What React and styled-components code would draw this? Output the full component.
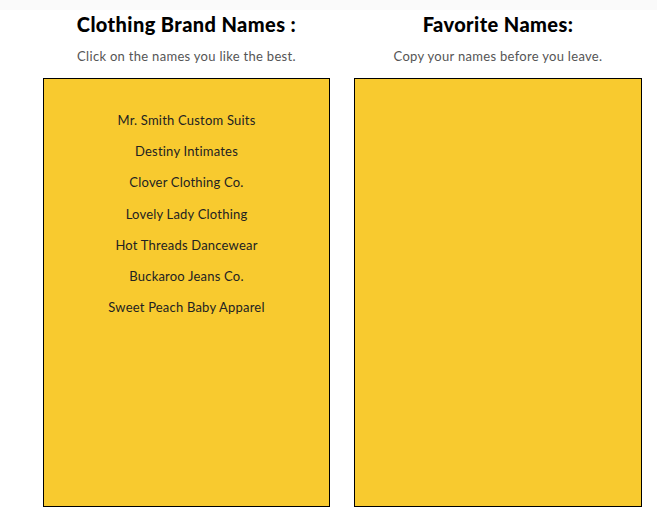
import styled, { createGlobalStyle } from 'styled-components';

const GlobalStyle = createGlobalStyle`
    body {
        margin: 0;
        background: #ffffff;
        font-family: Lato, "Open Sans", sans-serif;
    }
`;

const TopStrip = styled.div`
    height: 10px;
    background: #fafafa;
`;

const Columns = styled.div`
    display: flex;
    gap: 24px;
    padding-left: 43px;
`;

const Column = styled.section`
    display: flex;
    flex-direction: column;
    align-items: center;
    width: ${p => p.width}px;
`;

const Heading = styled.h2`
    margin: 2px 0 0;
    font-size: 20px;
    line-height: 24px;
    font-weight: 900;
    letter-spacing: 0.4px;
    color: #000;
`;

const Subtitle = styled.p`
    margin: 11px 0 0;
    font-size: 13px;
    line-height: 18px;
    letter-spacing: 0.3px;
    color: #555;
`;

const Box = styled.div`
    box-sizing: border-box;
    width: 100%;
    height: 429px;
    margin-top: 13px;
    border: 1px solid #000;
    background: #f8ca2f;
    padding-top: 26px;
`;

const NameList = styled.ul`
    list-style: none;
    margin: 0;
    padding: 0;
    text-align: center;
`;

const NameItem = styled.li`
    font-size: 13px;
    line-height: 31.2px;
    letter-spacing: 0.2px;
    color: #222;
    cursor: pointer;
`;

const names = [
    'Mr. Smith Custom Suits',
    'Destiny Intimates',
    'Clover Clothing Co.',
    'Lovely Lady Clothing',
    'Hot Threads Dancewear',
    'Buckaroo Jeans Co.',
    'Sweet Peach Baby Apparel',
];

const App = () => {

    return (
        <>
            <GlobalStyle />
            <TopStrip />
            <Columns>
                <Column width={287}>
                    <Heading>Clothing Brand Names :</Heading>
                    <Subtitle>Click on the names you like the best.</Subtitle>
                    <Box>
                        <NameList>
                            {names.map(name => <NameItem key={name}>{name}</NameItem>)}
                        </NameList>
                    </Box>
                </Column>
                <Column width={288}>
                    <Heading>Favorite Names:</Heading>
                    <Subtitle>Copy your names before you leave.</Subtitle>
                    <Box />
                </Column>
            </Columns>
        </>
    );
};

export default App;
